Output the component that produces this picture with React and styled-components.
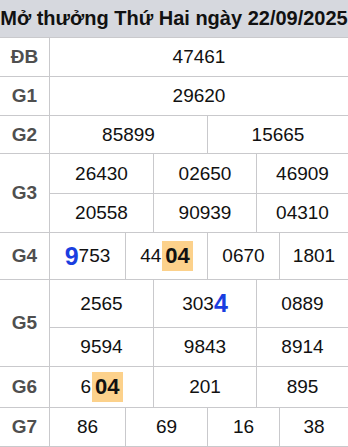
import React from "react";
import styled, { createGlobalStyle } from "styled-components";

const GlobalStyle = createGlobalStyle`
  html, body {
    margin: 0;
    padding: 0;
    background: #ffffff;
    overflow: hidden;
  }
  body {
    font-family: "Liberation Sans", Arial, sans-serif;
    color: #111111;
  }
`;

const Board = styled.div`
  display: grid;
  grid-template-columns: 49px 75px 27px 53px 48px 22px 68px;
  grid-template-rows: 37px 38px 38px 37px 39px 38px 46px 47px 38px 40px 38px;
  gap: 1px;
  padding-bottom: 1px;
  width: 348px;
  background: #c9c9cc;
`;

const Title = styled.div`
  grid-column: 1 / -1;
  display: flex;
  align-items: center;
  justify-content: center;
  background: #d6d8de;
  font-size: 20px;
  font-weight: 700;
  color: #111111;
  white-space: nowrap;
`;

const Label = styled.div`
  grid-column: 1;
  grid-row: span ${(p) => p.$rows || 1};
  display: flex;
  align-items: center;
  justify-content: center;
  background: #ffffff;
  font-size: 19px;
  font-weight: 700;
  color: #4f4f4f;
`;

const Cell = styled.div`
  grid-column: ${(p) => p.$col};
  display: flex;
  align-items: center;
  justify-content: center;
  background: #ffffff;
  font-size: 19px;
  color: #111111;
  white-space: nowrap;
`;

const Big = styled.span`
  font-size: 25px;
  font-weight: 700;
  color: #1a3ee0;
`;

const Mark = styled.span`
  display: inline-block;
  margin-left: 1px;
  padding: 0 3px;
  line-height: 30px;
  background: #fcd18b;
  font-size: 22px;
  font-weight: 700;
  color: #111111;
`;

const FULL = ["2 / -1"];
const HALF = ["2 / 5", "5 / -1"];
const THIRD = ["2 / 4", "4 / 6", "6 / -1"];
const QUARTER = ["2 / 3", "3 / 5", "5 / 7", "7 / -1"];

const prizes = [
  { label: "ĐB", cols: FULL, lines: [["47461"]] },
  { label: "G1", cols: FULL, lines: [["29620"]] },
  { label: "G2", cols: HALF, lines: [["85899", "15665"]] },
  {
    label: "G3",
    cols: THIRD,
    lines: [
      ["26430", "02650", "46909"],
      ["20558", "90939", "04310"],
    ],
  },
  {
    label: "G4",
    cols: QUARTER,
    lines: [
      [
        <><Big>9</Big>753</>,
        <>44<Mark>04</Mark></>,
        "0670",
        "1801",
      ],
    ],
  },
  {
    label: "G5",
    cols: THIRD,
    lines: [
      ["2565", <>303<Big>4</Big></>, "0889"],
      ["9594", "9843", "8914"],
    ],
  },
  { label: "G6", cols: THIRD, lines: [[<>6<Mark>04</Mark></>, "201", "895"]] },
  { label: "G7", cols: QUARTER, lines: [["86", "69", "16", "38"]] },
];

const App = () => {
  return (
    <>
      <GlobalStyle />
      <Board>
        <Title>Mở thưởng Thứ Hai ngày 22/09/2025</Title>
        {prizes.map((prize) => (
          <React.Fragment key={prize.label}>
            <Label $rows={prize.lines.length}>{prize.label}</Label>
            {prize.lines.map((line, i) =>
              line.map((value, j) => (
                <Cell key={`${i}-${j}`} $col={prize.cols[j]}>
                  {value}
                </Cell>
              ))
            )}
          </React.Fragment>
        ))}
      </Board>
    </>
  );
};

export default App;
